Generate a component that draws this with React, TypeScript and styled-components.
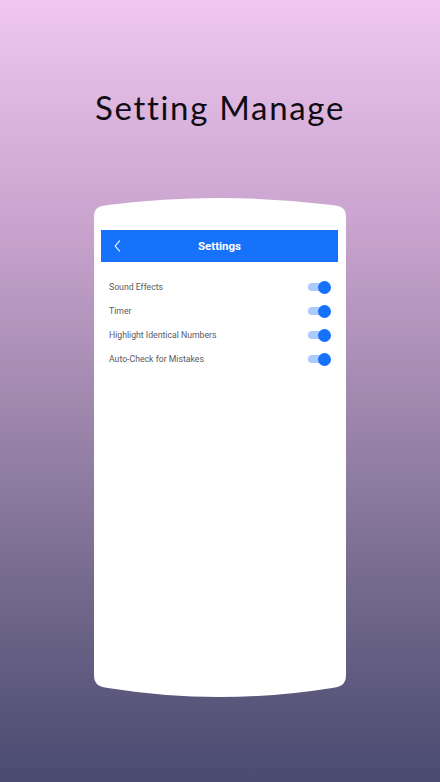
import { createGlobalStyle } from 'styled-components'
import styled from 'styled-components'

const GlobalStyle = createGlobalStyle`
  html, body {
    margin: 0;
    padding: 0;
  }
  body {
    width: 440px;
    height: 782px;
    overflow: hidden;
  }
`

const Page = styled.div`
  width: 440px;
  height: 782px;
  background: linear-gradient(180deg, #efc7f0 0%, #c7a2cc 30%, #9a84a9 55%, #6e6689 78%, #4a4a70 100%);
  display: flex;
  flex-direction: column;
  align-items: center;
  font-family: Roboto, 'Liberation Sans', sans-serif;
`

const Title = styled.h1`
  margin: 86px 0 0;
  height: 42px;
  font-family: Lato, 'DejaVu Sans', sans-serif;
  font-weight: 400;
  font-size: 33px;
  line-height: 42px;
  letter-spacing: 1.7px;
  color: #100c14;
`

// phone frame: bulging top and bottom edges
const Phone = styled.div`
  margin-top: 70px;
  width: 252px;
  height: 500px;
  background: #fff;
  clip-path: path('M0,19 C0,9 6,8 14,7 Q126,-7 238,7 C246,8 252,9 252,19 L252,477 C252,487 246,489 238,490 Q126,508 14,490 C6,489 0,487 0,477 Z');
  padding: 32px 8px 0 7px;
  box-sizing: border-box;
`

const TopBar = styled.div`
  height: 32px;
  background: #1672fa;
  display: grid;
  grid-template-columns: 32px 1fr 32px;
  align-items: center;
`

const BackButton = styled.div`
  display: flex;
  align-items: center;
  justify-content: center;
  padding-left: 1px;
`

const BarTitle = styled.div`
  text-align: center;
  color: #fff;
  font-weight: 700;
  font-size: 11.5px;
`

const List = styled.div`
  display: flex;
  flex-direction: column;
  padding: 13px 7px 0 8px;
`

const Row = styled.div`
  height: 24px;
  display: flex;
  align-items: center;
  justify-content: space-between;
`

const Label = styled.span`
  font-size: 8.7px;
  color: #5a5a5e;
`

const Toggle = styled.div<{ on: boolean }>`
  position: relative;
  width: 23px;
  height: 13px;
  &::before {
    content: '';
    position: absolute;
    left: 0;
    top: 2.5px;
    width: 19px;
    height: 8px;
    border-radius: 4px;
    background: ${p => (p.on ? '#aacbfb' : '#c9c9c9')};
  }
  &::after {
    content: '';
    position: absolute;
    top: 0;
    left: ${p => (p.on ? '10px' : '0')};
    width: 13px;
    height: 13px;
    border-radius: 50%;
    background: ${p => (p.on ? '#1672fa' : '#f1f1f1')};
  }
`

const settings = ['Sound Effects', 'Timer', 'Highlight Identical Numbers', 'Auto-Check for Mistakes']

const App = () => {
  return (
    <>
      <GlobalStyle />
      <Page>
        <Title>Setting Manage</Title>
        <Phone>
          <TopBar>
            <BackButton>
              <svg width="7" height="12" viewBox="0 0 7 12">
                <path d="M5.8 0.6 L1.2 6 L5.8 11.4" stroke="#fff" strokeWidth="1.1" fill="none" />
              </svg>
            </BackButton>
            <BarTitle>Settings</BarTitle>
            <div />
          </TopBar>
          <List>
            {settings.map(s => (
              <Row key={s}>
                <Label>{s}</Label>
                <Toggle on />
              </Row>
            ))}
          </List>
        </Phone>
      </Page>
    </>
  )
}

export default App
